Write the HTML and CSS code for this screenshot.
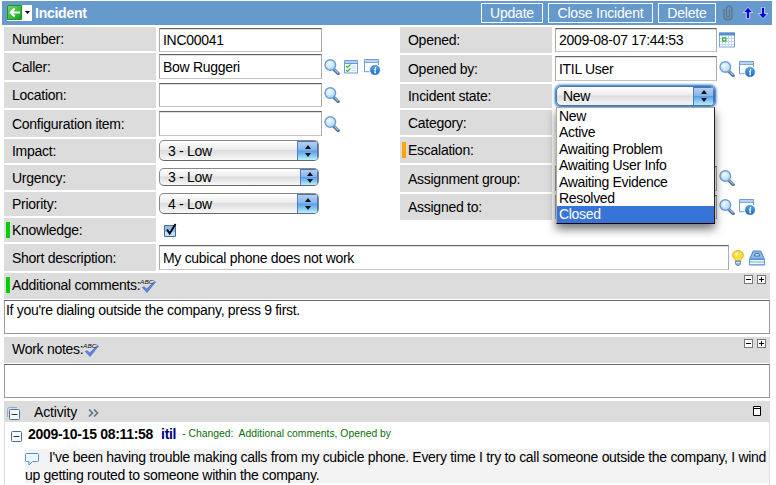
FILE: index.html
```
<!DOCTYPE html>
<html lang="en">
<head>
<meta charset="utf-8">
<title>Incident</title>
<link rel="stylesheet" href="styles.css">
</head>
<body>
<svg class="defs" width="0" height="0">
  <defs>
    <radialGradient id="lens" cx=".4" cy=".35" r=".7"><stop offset="0" stop-color="#f4fbff"/><stop offset="1" stop-color="#a9d3f5"/></radialGradient>
    <linearGradient id="ball" x1="0" y1="0" x2="0" y2="1"><stop offset="0" stop-color="#5aa9ee"/><stop offset="1" stop-color="#1765bd"/></linearGradient>
    <linearGradient id="go" x1="0" y1="0" x2="1" y2="1"><stop offset="0" stop-color="#7fd877"/><stop offset="1" stop-color="#0ba010"/></linearGradient>
    <symbol id="search" viewBox="0 0 16 16"><path d="M10 10.500l4.200 4.200" stroke="#55779e" stroke-width="3.200" stroke-linecap="round"/><path d="M10.500 10.300l3.800 3.800" stroke="#a5c1de" stroke-width="1.200"/><circle cx="6.300" cy="6" r="5.300" fill="url(#lens)" stroke="#6b9ed4" stroke-width="1.400"/></symbol>
    <symbol id="info" viewBox="0 0 16 16"><path d="M.5.5h14v12H.5z" fill="#fff"/><path d="M14.500 6V.5H.5v12.200h5" fill="none" stroke="#6f9cd2"/><path d="M1 1h13v2H1z" fill="#b9d4f2"/><path d="M1 3.500h13" stroke="#7fa8d8"/><circle cx="11" cy="11" r="4.800" fill="url(#ball)" stroke="#2e76c4" stroke-width=".5"/><path d="M11.600 8v1.400M10 10.400h1.300l-.4 3.200h1.200" fill="none" stroke="#fff" stroke-width="1.200"/></symbol>
    <symbol id="list" viewBox="0 0 14 14"><path d="M.5.5h13v12.500H.5z" fill="#f5faff" stroke="#6f9cd2"/><path d="M1 1h12v2H1z" fill="#b0cff0"/><path d="M1 3.500h12" stroke="#6f9cd2"/><path d="M7.500 6h4.500M7.500 8h4.500M7.500 10.500h4.500" stroke="#c7dcf2"/><path d="M2 6l1.500 1.500L6.500 4.500M2 10l1.500 1.500L6.500 8.500" fill="none" stroke="#35b32c" stroke-width="1.200"/></symbol>
    <symbol id="check" viewBox="0 0 16 14"><path d="M2.300 8.500l2-.8 2.200 2.400L14.300 2.600 15.500 3 7 13.500z" fill="#5b87e0" stroke="#3a63be" stroke-width=".6"/><text x="0" y="5" class="abc" textLength="13.500" lengthAdjust="spacingAndGlyphs">ABC</text></symbol>
  </defs>
</svg>
<div class="page">
  <header class="bar">
    <div class="back">
      <svg width="24" height="16" viewBox="0 0 24 16"><path d="M.5.5h14v14H.5z" fill="url(#go)" stroke="#159b1c"/><path d="M13 7.500H4M7.700 3.500l-4 4 4 4" fill="none" stroke="#fff" stroke-width="2"/><path d="M18 6h5l-2.500 3z"/></svg>
    </div>
    <h1>Incident</h1>
    <button class="btn update">Update</button>
    <button class="btn close">Close Incident</button>
    <button class="btn delete">Delete</button>
    <svg class="clip" width="10" height="16" viewBox="0 0 10 16"><path d="M1 4v7.500c0 4.500 8 4.500 8 0V4c0-4-5.500-4-5.500 0v7c0 2 3 2 3 0V4.500" fill="none" stroke="#64717f" stroke-width="1.200"/></svg>
    <svg class="arrows" width="25" height="12" viewBox="0 0 25 12"><g fill="#0000e0" stroke="#fff" stroke-width=".7"><path d="M5 .3L9.700 5.500H6.600v6.200H3.400V5.500H.3z"/><path d="M20 11.700l-4.700-5.200h3.100V.3h3.200v6.200h3.100z"/></g></svg>
  </header>

  <div class="columns">
    <div class="fields left">
      <label>Number:</label><div class="cell"><div class="input">INC00041</div></div>
      <label>Caller:</label><div class="cell"><div class="input tall">Bow Ruggeri</div><svg class="ic"><use href="#search"/></svg><svg class="ic small"><use href="#list"/></svg><svg class="ic"><use href="#info"/></svg></div>
      <label>Location:</label><div class="cell"><div class="input"></div><svg class="ic"><use href="#search"/></svg></div>
      <label>Configuration item:</label><div class="cell"><div class="input tall"></div><svg class="ic"><use href="#search"/></svg></div>
      <label>Impact:</label><div class="cell up"><div class="select">3 - Low<span class="knob"></span></div></div>
      <label>Urgency:</label><div class="cell up"><div class="select mini">3 - Low<span class="knob"></span></div></div>
      <label>Priority:</label><div class="cell up"><div class="select">4 - Low<span class="knob"></span></div></div>
      <label class="flag green">Knowledge:</label><div class="cell"><svg class="checkbox" width="13" height="14" viewBox="0 0 13 14"><path d="M.5 2.500h11v11H.5z" fill="#8dbcf0" stroke="#56698c"/><path d="M1 9h10v4H1z" fill="#b6e2ff"/><path d="M3 6.500l2.700 4L11.500 1" fill="none" stroke="#000" stroke-width="1.900"/></svg></div>
    </div>
    <div class="fields right">
      <label>Opened:</label><div class="cell"><div class="input">2009-08-07 17:44:53</div><svg class="ic" viewBox="0 0 16 16"><path d="M.5 1h15v14H.5z" fill="#fff" stroke="#7ba6d8"/><path d="M0 .5h16v3H0z" fill="#548cce"/><path d="M1 6.500h14M1 9.500h14M1 12.500h14M3.500 4v11M6.500 4v11M9.500 4v11M12.500 4v11" stroke="#c4dbf3"/><rect x="3.700" y="6" width="3.200" height="3" fill="#fff" stroke="#22a51f" stroke-width="1.200"/></svg></div>
      <label>Opened by:</label><div class="cell"><div class="input tall">ITIL User</div><svg class="ic"><use href="#search"/></svg><svg class="ic"><use href="#info"/></svg></div>
      <label>Incident state:</label><div class="cell"><div class="select focus">New<span class="knob"></span></div>
        <ul class="menu"><li>New</li><li>Active</li><li>Awaiting Problem</li><li>Awaiting User Info</li><li>Awaiting Evidence</li><li>Resolved</li><li class="on">Closed</li></ul>
      </div>
      <label>Category:</label><div class="cell"></div>
      <label class="flag orange">Escalation:</label><div class="cell"></div>
      <label>Assignment group:</label><div class="cell"><div class="input tall"></div><svg class="ic raised"><use href="#search"/></svg></div>
      <label>Assigned to:</label><div class="cell"><div class="input"></div><svg class="ic"><use href="#search"/></svg><svg class="ic"><use href="#info"/></svg></div>
    </div>
  </div>

  <div class="fields short">
    <label>Short description:</label>
    <div class="cell"><div class="input wide">My cubical phone does not work</div>
      <svg class="bulb" width="12" height="16" viewBox="0 0 12 16"><path d="M3.500 11C3.500 8.500.6 8 .6 5.300.6 2.300 3 .6 6 .6s5.400 1.700 5.400 4.700C11.400 8 8.500 8.500 8.500 11z" fill="#ffdc3e" stroke="#e2ad28"/><path d="M3 4.500C3.300 3 4.500 2.200 6 2.500L5 7z" fill="#fffbd2"/><path d="M3.500 11h5v3l-1.300 1.500H4.800L3.500 14z" fill="#86a9d6" stroke="#557cae" stroke-width=".7"/><path d="M4 12.700h4" stroke="#eef6ff"/></svg>
      <svg class="ic" viewBox="0 0 16 16"><path d="M.7 9L4.200 1h7.600l3.500 8z" fill="#8ab8e8" stroke="#4e86c4"/><path d="M.5 9.500h15V15H.5z" fill="#edf5fd" stroke="#5e93cf"/><path d="M1 12h14M1 14.500h14" stroke="#7fa9d9"/><path d="M5.500 6l.8-2.500h3.500l.8 2.500z" fill="#d5e9fb" stroke="#3b73b5"/></svg></div>
  </div>

  <section class="strip"><span class="title flag green">Additional comments:</span><svg class="spell"><use href="#check"/></svg><span class="pm"><i></i><i class="plus"></i></span></section>
  <div class="area">If you're dialing outside the company, press 9 first.</div>
  <section class="strip"><span class="title">Work notes:</span><svg class="spell"><use href="#check"/></svg><span class="pm"><i></i><i class="plus"></i></span></section>
  <div class="area"></div>

  <section class="activity">
    <div class="head">
      <svg class="all" width="13" height="13" viewBox="0 0 13 13"><path d="M.5 10V2.500a2 2 0 012-2H10" fill="none" stroke="#8ab1cf"/><rect x="2.500" y="2.500" width="10" height="10" rx="1" fill="#f5fafd" stroke="#55758f"/><path d="M4.500 7.500h6" stroke="#223e55"/></svg>
      <span>Activity</span>
      <svg class="more" width="11" height="8" viewBox="0 0 11 8"><path d="M1 .5L4.500 4 1 7.500M6 .5L9.500 4 6 7.500" fill="none" stroke="#66758a" stroke-width="1.700"/></svg>
      <svg class="win" width="8" height="10" viewBox="0 0 8 10"><path d="M.5.5h7v9h-7zM0 2.500h8" fill="#fff" stroke="#000"/></svg>
    </div>
    <div class="entry">
      <svg width="11" height="11" viewBox="0 0 11 11"><rect x=".5" y=".5" width="10" height="10" rx="1" fill="#f7fafc" stroke="#4f6d86"/><path d="M2.500 5.500h6" stroke="#223e55"/></svg>
      <b class="date">2009-10-15 08:11:58</b><b class="user">itil</b><span class="changed">- Changed:&nbsp; Additional comments, Opened by</span>
    </div>
    <div class="comment">
      <p><svg width="14" height="13" viewBox="0 0 14 13"><path d="M1.500.5h11q1 0 1 1v6q0 1-1 1H7.500l-3.500 3.500V8.500H1.500q-1 0-1-1v-6q0-1 1-1z" fill="#eff8ff" stroke="#4b93d4"/></svg><span class="line1">I've been having trouble making calls from my cubicle phone. Every time I try to call someone outside the company, I wind</span></p>
      <p><span class="line2">up getting routed to someone within the company.</span></p>
    </div>
  </section>
</div>
</body>
</html>
```
FILE: styles.css
```
* { box-sizing: border-box; }
html, body { margin: 0; height: 485px; overflow: hidden; background: #fff; }
body { font: 14px/16px "Liberation Sans", Arial, sans-serif; letter-spacing: -.3px; color: #000; }
svg { display: block; flex: none; }
.defs { position: absolute; }
.abc { font: italic 6px "Liberation Sans", sans-serif; letter-spacing: 0; fill: #111; }
.page { width: 776px; height: 485px; padding: 1px 4px 0 2px; overflow: hidden; }

.bar { display: flex; align-items: center; height: 24px; background: #69c; color: #fff; width: 770px; }
.back { width: 25px; height: 16px; margin-left: 5px; background: #fff; }
h1 { margin: 0 auto 0 3px; font-size: 14px; line-height: 16px; letter-spacing: -.25px; }
.btn { height: 20px; margin: 0 5px 0 0; padding: 0; border: 1px solid #fff; background: #69c; color: #fff; font: 14px/16px "Liberation Sans", Arial, sans-serif; letter-spacing: -.2px; }
.update { width: 62px; }
.close { width: 105px; }
.delete { width: 58px; }
.clip { margin: 0 10px 0 2px; }
.arrows { margin: 0 4px 0 0; }

.columns { display: flex; gap: 20px; margin: 2px 0 0 2px; }
.fields { display: grid; grid-template-columns: 152px 1fr; column-gap: 3px; row-gap: 2px; align-content: start; }
.left { width: 376px; grid-template-rows: 24px 27px 26px 27px 24px 25px 24px 24px; }
.right { width: 372px; grid-template-rows: 26px 27px 24px 25px 26px 27px 26px; }
.short { margin: 2px 0 0 2px; grid-template-rows: 27px; }
label { display: flex; align-items: center; padding-left: 8px; background: #dcdcdc; white-space: nowrap; letter-spacing: -.27px; }
.flag::before { content: ""; width: 4px; height: 16px; }
label.flag::before { margin: 0 2px 0 -6px; }
.green::before { background: #00d000; }
.orange::before { background: orange; }
.cell { display: flex; align-items: center; position: relative; }
.cell.up { padding-bottom: 1px; }
.input { width: 163px; height: 24px; padding: 3px 0 0 3px; border: 1px solid #aaa; border-top: 1px solid #666; border-bottom-color: #c4c4c4; background: #fff; box-shadow: inset 0 1px #ddd; white-space: nowrap; }
.left .cell:nth-of-type(1) .input { position: relative; top: 1px; }
.right .input { width: 162px; }
.input.tall { height: 25px; padding-top: 4px; }
.input.wide { width: 570px; height: 25px; padding-top: 4px; }
.ic { width: 16px; height: 16px; margin-left: 2px; }
.ic + .ic { margin-left: 4px; }
.ic.small { width: 14px; height: 14px; }
.ic.small + .ic { margin-left: 6px; }
.ic.raised { margin-bottom: 1px; }
.bulb { margin-left: 3px; }
.bulb + .ic { margin-left: 5px; }
.checkbox { margin-left: 5px; }

.select { display: flex; align-items: center; justify-content: space-between; width: 160px; height: 21px; padding-left: 8px; border: 1px solid #888; border-bottom-color: #666; border-radius: 5px; background: linear-gradient(#fff, #ececec 45%, #dcdcdc 50%, #f9f9f9); overflow: hidden; }
.mini { height: 18px; }
.knob { display: flex; flex-direction: column; align-items: center; justify-content: center; gap: 4px; align-self: stretch; width: 21px; border-left: 1px solid #4e80c8; box-shadow: inset -1px 1px #5470b4; background: linear-gradient(#b7d2f3, #86b6ec 48%, #599ce4 52%, #b5f2ff); }
.knob::before, .knob::after { content: ""; border: 3px solid transparent; border-top-width: 0; border-bottom: 4px solid #111; }
.knob::after { border-bottom-width: 0; border-top: 4px solid #111; }
.mini .knob { width: 18px; gap: 3px; }
.focus { width: 159px; height: 20px; margin-left: 1px; border-color: #4479b5; box-shadow: 0 0 0 1px #5b95d2, 0 0 2px 2px #86b5e5; padding-left: 6px; }

.menu { position: absolute; z-index: 2; left: 1px; top: 23px; width: 159px; height: 117px; margin: 0; padding: 0; list-style: none; background: #fff; border: 1px solid #aaa; border-right-color: #222; border-bottom-color: #000; box-shadow: 0 5px 9px rgba(0,0,0,.55); }
.menu li { height: 16.4px; padding-left: 2px; line-height: 16.4px; letter-spacing: -.33px; }
.menu .on { background: #3874d8; color: #fff; height: 17px; line-height: 17px; }

.strip { display: flex; align-items: flex-start; height: 26px; margin: 2px 0 0 2px; width: 766px; padding: 4px 4px 0 8px; background: #dcdcdc; letter-spacing: -.27px; }
.title { display: flex; align-items: center; }
.title.flag::before { margin: 0 2px 0 -6px; }
.spell { width: 16px; height: 14px; margin: 2px 0 0; }
.pm { display: flex; gap: 4px; margin: -2px 0 0 auto; }
.pm i { width: 9px; height: 9px; border: 1px solid #777; background: linear-gradient(#000, #000) center / 5px 1px no-repeat #fff; }
.pm .plus { background: linear-gradient(#000, #000) center / 5px 1px no-repeat, linear-gradient(#000, #000) center / 1px 5px no-repeat #fff; }
.area { width: 766px; height: 34px; margin: 1px 0 3px 2px; padding: 1px; border: 1px solid #999; border-top-color: #666; }
.area + .strip { margin-top: 3px; }

.activity { width: 766px; height: 90px; margin: 3px 0 0 2px; border: solid #dcdcdc; border-width: 0 1px; }
.head { display: flex; align-items: center; height: 21px; margin: 0 -1px; padding: 0 9px 0 3px; background: #dcdcdc; }
.head span { margin-left: 14px; letter-spacing: -.15px; }
.all { margin-top: 3px; }
.more { margin: 3px 0 0 11px; }
.win { margin-left: auto; margin-bottom: 1px; }
.entry { display: flex; align-items: center; height: 27px; padding: 0 0 3px 6px; white-space: pre; }
.entry svg { margin-top: 4px; }
.date { margin-left: 6px; }
.user { margin-left: 8px; color: #000080; }
.changed { margin-left: 6px; font-size: 10.35px; letter-spacing: 0; color: #0a700a; }
.comment { margin-left: 20px; height: 34px; background: #f3f3f3; }
.comment p { display: flex; height: 18px; margin: 0; line-height: 17px; white-space: nowrap; }
.comment svg { margin-top: 4px; }
.line1 { margin-left: 10px; }
```
